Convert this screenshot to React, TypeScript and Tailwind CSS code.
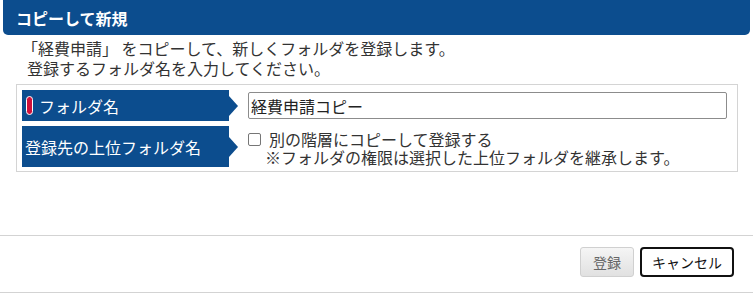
import React from "react";

const BLUE = "bg-[#0c4d8e]";

function Label({ children, required }: { children: React.ReactNode; required?: boolean }) {
  return (
    <div className="flex h-full shrink-0 items-center">
      <div className={`flex h-full w-[207px] items-center ${BLUE} ${required ? "pl-[4px]" : "pl-[3px]"} text-white`}>
        {required && (
          <span className="mr-[6px] h-[19px] w-[7px] rounded-[4px] border border-white bg-[#d0103a]" />
        )}
        {children}
      </div>
      <span className="h-0 w-0 border-y-[10px] border-l-[9px] border-y-transparent border-l-[#0c4d8e]" />
    </div>
  );
}

export default function App() {
  return (
    <div
      className="h-[295px] w-[753px] overflow-hidden bg-white text-[16px] text-[#333]"
      style={{ fontFamily: '"Noto Sans CJK JP", "Noto Sans", sans-serif' }}
    >
      <div className={`mx-[3px] flex h-[35px] items-center rounded-b-[5px] ${BLUE} pl-[13px] font-bold text-white`}>
        コピーして新規
      </div>

      <div className="mt-[3px] pl-[22px] leading-[20px]">
        <div>「経費申請」 をコピーして、新しくフォルダを登録します。</div>
        <div className="pl-[5px]">登録するフォルダ名を入力してください。</div>
      </div>

      <div className="ml-[16px] mt-[6px] w-[722px] border border-[#d4d4d4] px-[5px] pb-[4px] pt-[5px]">
        <div className="flex h-[31px] items-center">
          <Label required>フォルダ名</Label>
          <input
            readOnly
            value="経費申請コピー"
            className="ml-[10px] h-[27px] w-[479px] rounded-[2px] border border-[#8c8c8c] px-[2px] text-[16px] text-[#222] outline-none"
          />
        </div>
        <div className="mt-[5px] flex h-[41px]">
          <Label>登録先の上位フォルダ名</Label>
          <div className="ml-[10px] pt-[4px] leading-[18px]">
            <label className="flex items-center">
              <span className="mr-[8px] h-[13px] w-[13px] rounded-[2px] border border-[#767676] bg-white" />
              別の階層にコピーして登録する
            </label>
            <div className="pl-[17px]">※フォルダの権限は選択した上位フォルダを継承します。</div>
          </div>
        </div>
      </div>

      <div className="mt-[63px] flex justify-end gap-[6px] border-y border-[#d3d3d3] pb-[15px] pl-0 pr-[19px] pt-[11px]">
        <button
          type="button"
          className="h-[30px] w-[54px] rounded-[3px] border border-[#d0d0d0] bg-gradient-to-b from-[#f5f5f5] to-[#e1e1e1] text-[14px] text-[#666]"
        >
          登録
        </button>
        <button
          type="button"
          className="h-[30px] w-[94px] rounded-[4px] border-2 border-[#111] bg-white text-[14px] text-[#111]"
        >
          キャンセル
        </button>
      </div>
    </div>
  );
}
